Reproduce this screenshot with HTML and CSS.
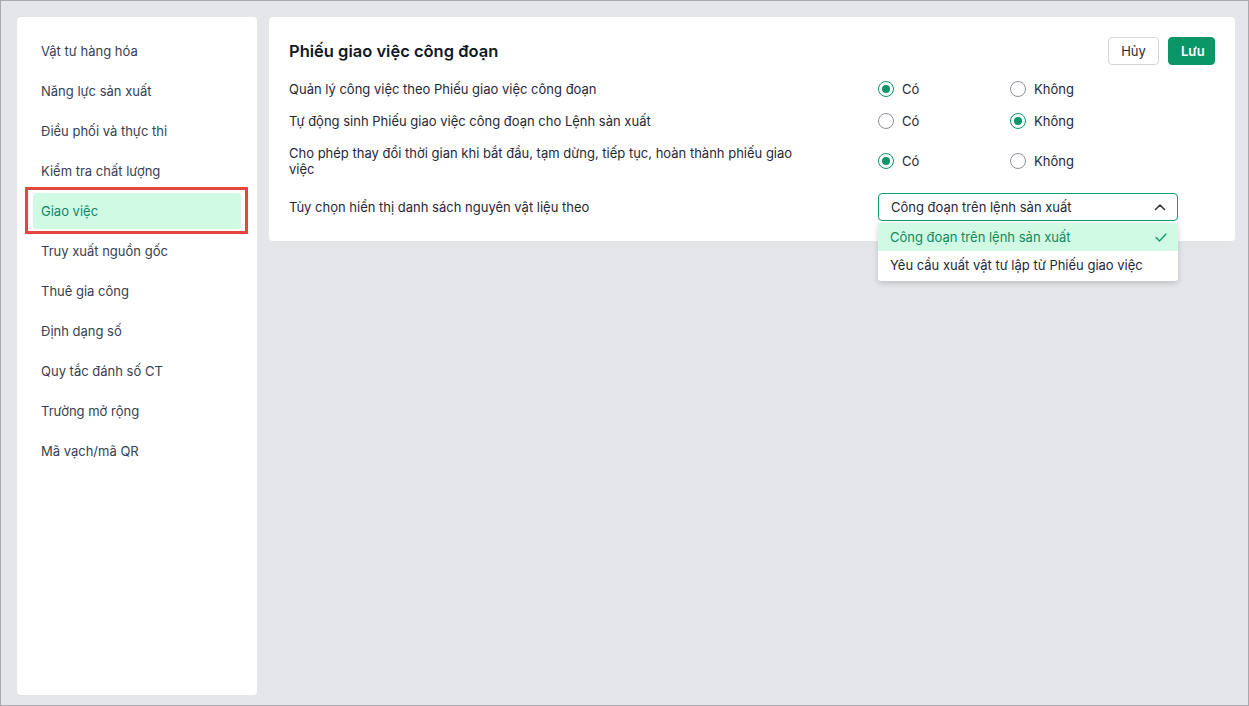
FILE: index.html
```html
<!DOCTYPE html>
<html lang="vi">
<head>
<meta charset="utf-8">
<link rel="stylesheet" href="styles.css">
</head>
<body>
<div class="frame">
  <aside class="sidebar">
    <div class="nav-item">Vật tư hàng hóa</div>
    <div class="nav-item">Năng lực sản xuất</div>
    <div class="nav-item">Điều phối và thực thi</div>
    <div class="nav-item">Kiểm tra chất lượng</div>
    <div class="nav-item active">Giao việc<span class="mark"></span></div>
    <div class="nav-item">Truy xuất nguồn gốc</div>
    <div class="nav-item">Thuê gia công</div>
    <div class="nav-item">Định dạng số</div>
    <div class="nav-item">Quy tắc đánh số CT</div>
    <div class="nav-item">Trường mở rộng</div>
    <div class="nav-item">Mã vạch/mã QR</div>
  </aside>
  <main class="panel">
    <div class="header">
      <h1 class="title">Phiếu giao việc công đoạn</h1>
      <div class="actions">
        <button class="btn btn-cancel">Hủy</button>
        <button class="btn btn-save">Lưu</button>
      </div>
    </div>
    <div class="rows">
      <div class="row">
        <div class="label">Quản lý công việc theo Phiếu giao việc công đoạn</div>
        <div class="options">
          <div class="opt"><span class="radio on"></span>Có</div>
          <div class="opt"><span class="radio"></span>Không</div>
        </div>
      </div>
      <div class="row">
        <div class="label">Tự động sinh Phiếu giao việc công đoạn cho Lệnh sản xuất</div>
        <div class="options">
          <div class="opt"><span class="radio"></span>Có</div>
          <div class="opt"><span class="radio on"></span>Không</div>
        </div>
      </div>
      <div class="row row-long">
        <div class="label">Cho phép thay đổi thời gian khi bắt đầu, tạm dừng, tiếp tục, hoàn thành phiếu giao việc</div>
        <div class="options">
          <div class="opt"><span class="radio on"></span>Có</div>
          <div class="opt"><span class="radio"></span>Không</div>
        </div>
      </div>
      <div class="row row-select">
        <div class="label">Tùy chọn hiển thị danh sách nguyên vật liệu theo</div>
        <div class="select-wrap">
          <div class="select">
            <span>Công đoạn trên lệnh sản xuất</span>
            <svg class="chev" width="14" height="14" viewBox="0 0 14 14"><path d="M2.5 9.5 L7 5 L11.5 9.5" fill="none" stroke="#333" stroke-width="1.5" stroke-linecap="round" stroke-linejoin="round"/></svg>
          </div>
          <div class="menu">
            <div class="menu-item selected">
              <span>Công đoạn trên lệnh sản xuất</span>
              <svg width="14" height="14" viewBox="0 0 14 14"><path d="M2 7.5 L5.5 11 L12 4" fill="none" stroke="#0e9f6e" stroke-width="1.4" stroke-linecap="round" stroke-linejoin="round"/></svg>
            </div>
            <div class="menu-item">Yêu cầu xuất vật tư lập từ Phiếu giao việc</div>
          </div>
        </div>
      </div>
    </div>
  </main>
</div>
</body>
</html>
```
FILE: styles.css
```css
* { box-sizing: border-box; }
html, body { margin: 0; padding: 0; }
body {
  width: 1249px;
  height: 706px;
  font-family: Inter, "Noto Sans", sans-serif;
  font-size: 13px;
  color: #1f2937;
  background: #e5e6ea;
}
.frame {
  width: 1249px;
  height: 706px;
  border: 1px solid #a9a9ad;
  padding: 16px 13px 16px 16px;
  display: flex;
  align-items: flex-start;
  gap: 12px;
}
.sidebar {
  width: 240px;
  height: 678px;
  background: #fff;
  border-radius: 4px;
  padding: 16px;
  display: flex;
  flex-direction: column;
  gap: 4px;
}
.nav-item {
  position: relative;
  height: 36px;
  line-height: 36px;
  padding-left: 8px;
  color: #374151;
  border-radius: 3px;
}
.nav-item.active {
  background: #d1fae5;
  color: #0e8a60;
}
.mark {
  position: absolute;
  left: -8px;
  top: -6px;
  right: -7px;
  bottom: -5px;
  border: 3px solid #e5473f;
}
.panel {
  flex: 1;
  background: #fff;
  border-radius: 4px;
  padding: 20px;
}
.header {
  display: flex;
  align-items: center;
  justify-content: space-between;
  height: 28px;
}
.title {
  margin: 0;
  font-size: 16.5px;
  font-weight: 600;
  color: #111827;
}
.actions { display: flex; gap: 9px; }
.btn {
  height: 28px;
  font-family: inherit;
  font-size: 13px;
  border-radius: 4px;
  padding: 0 12px;
}
.btn-cancel {
  background: #fff;
  border: 1px solid #d4d6da;
  color: #1f2937;
  width: 51px;
}
.btn-save {
  background: #0b9668;
  border: 1px solid #0b9668;
  color: #fff;
  font-weight: 600;
  width: 47px;
}
.rows {
  margin-top: 14px;
  display: flex;
  flex-direction: column;
  gap: 12px;
}
.row {
  display: flex;
  align-items: center;
  min-height: 20px;
}
.label {
  width: 589px;
  padding-right: 70px;
  line-height: 16px;
}
.options { display: flex; }
.opt {
  width: 132px;
  display: flex;
  align-items: center;
  gap: 8px;
  line-height: 20px;
}
.radio {
  width: 16px;
  height: 16px;
  border: 1px solid #8a8f98;
  border-radius: 50%;
  position: relative;
}
.radio.on { border-color: #0b9668; }
.radio.on::after {
  content: "";
  position: absolute;
  left: 3px;
  top: 3px;
  width: 8px;
  height: 8px;
  border-radius: 50%;
  background: #0b9668;
}
.row-long { margin-top: 2px; }
.row-select { margin-top: 4px; }
.select-wrap { position: relative; width: 300px; }
.select {
  height: 28px;
  border: 1px solid #0e9f6e;
  border-radius: 4px;
  display: flex;
  align-items: center;
  justify-content: space-between;
  padding: 0 10px 0 12px;
}
.menu {
  position: absolute;
  left: 0;
  top: 30px;
  width: 300px;
  background: #fff;
  border-radius: 3px;
  box-shadow: 0 2px 6px rgba(0,0,0,0.18);
  padding-bottom: 2px;
}
.menu-item {
  height: 28px;
  display: flex;
  align-items: center;
  justify-content: space-between;
  padding: 0 10px 0 12px;
}
.menu-item.selected {
  background: #d1fae5;
  color: #0e8a60;
}
```
